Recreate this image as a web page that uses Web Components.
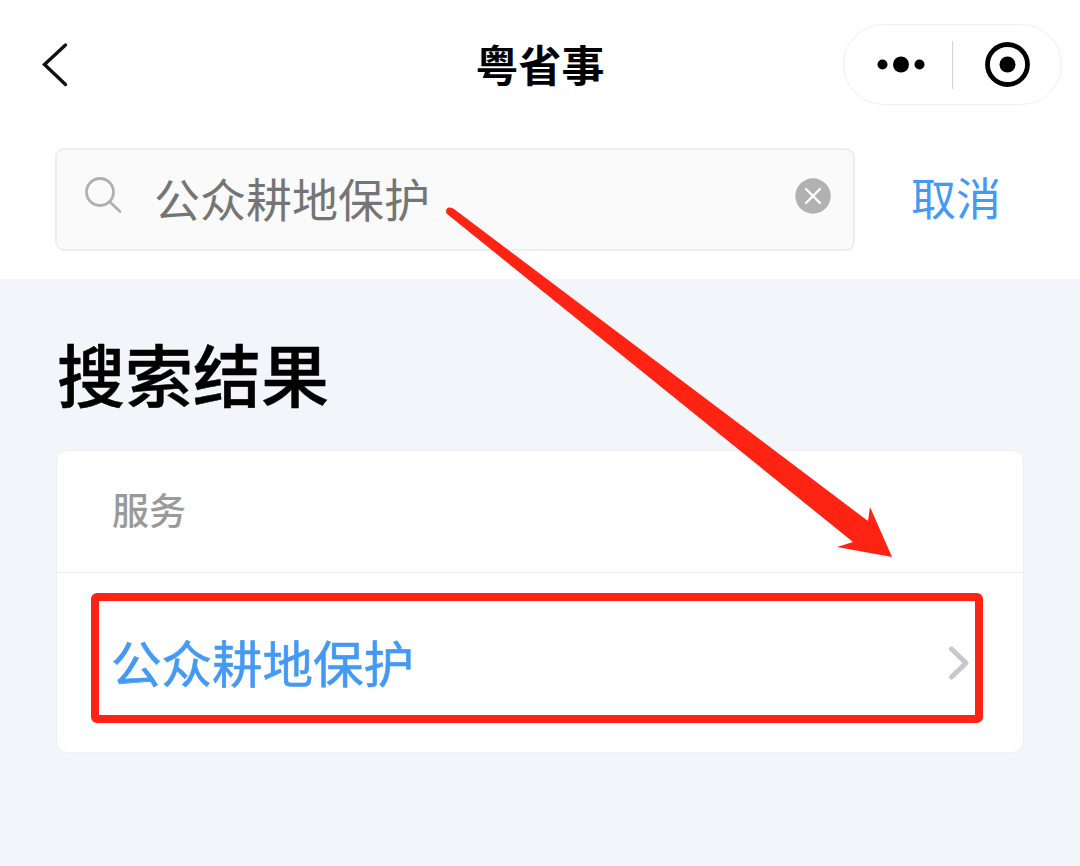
<!DOCTYPE html>
<html lang="zh">
<head>
<meta charset="utf-8">
<title>粤省事</title>
<style>
  html, body { margin: 0; padding: 0; background: #f2f5f9; }
  body { font-family: "Noto Sans CJK SC", "Noto Sans", sans-serif; }
</style>
</head>
<body>
<app-page>
  <nav-bar slot="top">粤省事</nav-bar>
  <search-bar slot="top" value="公众耕地保护" action="取消"></search-bar>
  <result-card heading="服务">
    <result-row>公众耕地保护</result-row>
  </result-card>
  <mark-up slot="over"></mark-up>
</app-page>

<script>
// small helper, every element gets an open shadow root from a string
function shadow(el, html) {
  el.attachShadow({mode: 'open'}).innerHTML = html;
}

customElements.define('app-page', class extends HTMLElement {
  constructor() {
    super();
    shadow(this, `
      <style>
        :host { display: block; position: relative; width: 1080px; height: 866px; overflow: hidden; background: #f2f5f9; }
        .top { background: #fff; height: 279px; }
        h1 { margin: 0; height: 171px; padding-left: 57px; font-size: 68px; line-height: 188px; font-weight: 500; -webkit-text-stroke: 0.5px #000; color: #000; }
        .list { padding: 0 56px; }
      </style>
      <div class="top"><slot name="top"></slot></div>
      <h1>搜索结果</h1>
      <div class="list"><slot></slot></div>
      <slot name="over"></slot>
    `);
  }
});

customElements.define('nav-bar', class extends HTMLElement {
  constructor() {
    super();
    shadow(this, `
      <style>
        :host { display: flex; align-items: center; justify-content: center; position: relative; height: 130px; }
        .title { font-size: 43px; font-weight: 700; color: #000; line-height: 126px; height: 130px; }
        .back { position: absolute; left: 40px; top: 40px; }
        .capsule { position: absolute; right: 18px; top: 24px; box-sizing: border-box; width: 219px; height: 81px; border: 1.5px solid #f0f0f0; border-radius: 40.5px; }
        svg { display: block; }
      </style>
      <svg class="back" width="30" height="50" viewBox="0 0 30 50"><path d="M25.5 5 L4.5 24.5 L25.5 44.5" fill="none" stroke="#111" stroke-width="3.4" stroke-linecap="round" stroke-linejoin="miter"/></svg>
      <span class="title"><slot></slot></span>
      <div class="capsule">
        <svg width="216" height="78" viewBox="0 0 216 78">
          <circle cx="38.5" cy="39.5" r="5"/><circle cx="57" cy="39.5" r="8"/><circle cx="75.5" cy="39.5" r="5"/>
          <rect x="108" y="16" width="1.2" height="48" fill="#d6d6d6"/>
          <circle cx="163.5" cy="39.5" r="20" fill="none" stroke="#000" stroke-width="4.8"/>
          <circle cx="163.5" cy="39.5" r="8"/>
        </svg>
      </div>
    `);
  }
});

customElements.define('search-bar', class extends HTMLElement {
  constructor() {
    super();
    shadow(this, `
      <style>
        :host { display: flex; align-items: center; height: 103px; margin-top: 18px; padding-left: 55px; }
        .box { box-sizing: border-box; width: 800px; height: 103px; display: flex; align-items: center; padding: 0 22px 0 28px; background: #fafafa; border: 2.5px solid #eeeeee; border-radius: 9px; }
        .text { flex: 1; margin-left: 31px; font-size: 46px; line-height: 92px; height: 98px; color: #757575; }
        .action { margin-left: 56px; font-size: 45px; color: #4499f5; line-height: 98px; height: 103px; }
        svg { display: block; flex: none; }
      </style>
      <div class="box">
        <svg width="38" height="40" viewBox="0 0 38 40" style="margin-top:-8px"><circle cx="15" cy="16" r="13.5" fill="none" stroke="#b0b0b0" stroke-width="2.8"/><path d="M25 26 L35 35.5" stroke="#b0b0b0" stroke-width="2.8" stroke-linecap="round"/></svg>
        <span class="text"></span>
        <svg width="36" height="36" viewBox="0 0 36 36" style="margin-top:-7px"><circle cx="18" cy="18" r="17.7" fill="#b1b1b1"/><path d="M11 11 L25 25 M25 11 L11 25" stroke="#fff" stroke-width="2.4" stroke-linecap="round"/></svg>
      </div>
      <span class="action"></span>
    `);
  }
  connectedCallback() {
    this.shadowRoot.querySelector('.text').textContent = this.getAttribute('value');
    this.shadowRoot.querySelector('.action').textContent = this.getAttribute('action');
  }
});

customElements.define('result-card', class extends HTMLElement {
  constructor() {
    super();
    shadow(this, `
      <style>
        :host { display: block; box-sizing: border-box; height: 303px; background: #fff; border: 1px solid #eef0f3; border-radius: 12px; }
        .head { box-sizing: border-box; height: 122px; padding-left: 55px; font-size: 37px; font-weight: 500; line-height: 116px; color: #9a9a9a; border-bottom: 1.5px solid #eeeeee; }
      </style>
      <div class="head"></div>
      <slot></slot>
    `);
  }
  connectedCallback() {
    this.shadowRoot.querySelector('.head').textContent = this.getAttribute('heading');
  }
});

customElements.define('result-row', class extends HTMLElement {
  constructor() {
    super();
    shadow(this, `
      <style>
        :host { display: flex; align-items: center; justify-content: space-between; height: 180px; padding: 0 53px 0 54px; }
        .label { font-size: 50.5px; font-weight: 400; -webkit-text-stroke: 0.6px #4499f5; color: #4499f5; line-height: 177px; height: 180px; }
        svg { display: block; }
      </style>
      <span class="label"><slot></slot></span>
      <svg width="22" height="34" viewBox="0 0 22 34"><path d="M3.5 3 L18 17 L3.5 31" fill="none" stroke="#c8c8cc" stroke-width="5" stroke-linecap="round" stroke-linejoin="round"/></svg>
    `);
  }
});

// the red annotation drawn on top of the screenshot
customElements.define('mark-up', class extends HTMLElement {
  constructor() {
    super();
    shadow(this, `
      <style>
        :host { position: absolute; inset: 0; display: block; pointer-events: none; }
        .frame { position: absolute; left: 91px; top: 592.5px; width: 892px; height: 130px; box-sizing: border-box; border: 8px solid #ff2314; border-radius: 6px; }
        svg { position: absolute; left: 0; top: 0; }
      </style>
      <div class="frame"></div>
      <svg width="1080" height="866" viewBox="0 0 1080 866">
        <path d="M446.5 213.5 Q445 208.5 449 207.5 Q451.5 207 454 209 L868 521 L870 507 L892 557 L837 547 L853 542 Z" fill="#ff2314"/>
      </svg>
    `);
  }
});
</script>
</body>
</html>
